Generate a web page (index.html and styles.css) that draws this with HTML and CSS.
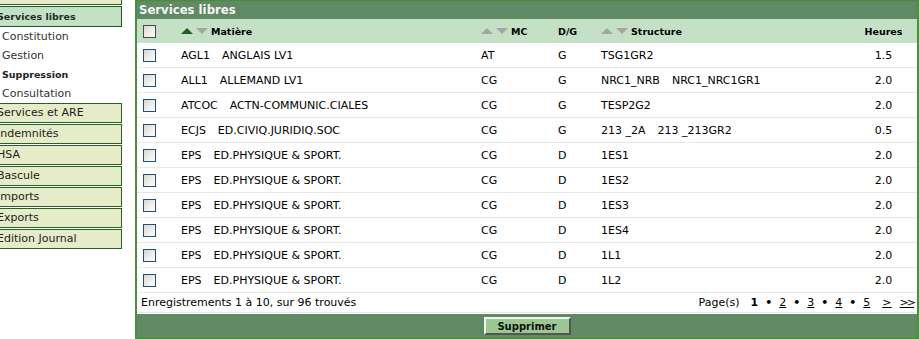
FILE: index.html
```html
<!DOCTYPE html>
<html lang="fr">
<head>
    <meta charset="UTF-8">
    <title>Services libres</title>
    <link rel="stylesheet" href="styles.css">
</head>
<body>
<div class="page">
    <div class="sidebar">
        <div class="menu-item cut"></div>
        <div class="menu-item active">Services libres</div>
        <a class="sub">Constitution</a>
        <a class="sub">Gestion</a>
        <a class="sub current">Suppression</a>
        <a class="sub">Consultation</a>
        <div class="menu-item">Services et ARE</div>
        <div class="menu-item">Indemnités</div>
        <div class="menu-item">HSA</div>
        <div class="menu-item">Bascule</div>
        <div class="menu-item">Imports</div>
        <div class="menu-item">Exports</div>
        <div class="menu-item">Edition Journal</div>
    </div>
    <div class="panel">
        <div class="panel-title">Services libres</div>
        <table class="grid">
            <colgroup>
                <col class="c-check"><col class="c-mat"><col class="c-mc"><col class="c-dg"><col class="c-struct"><col class="c-hrs">
            </colgroup>
            <tr class="head">
                <th><span class="check head-check"></span></th>
                <th><span class="up on"></span><span class="down"></span>Matière</th>
                <th><span class="up"></span><span class="down"></span>MC</th>
                <th>D/G</th>
                <th><span class="up"></span><span class="down"></span>Structure</th>
                <th class="hrs">Heures</th>
            </tr>
            <tr><td><span class="check"></span></td><td><span class="code">AGL1</span>ANGLAIS LV1</td><td>AT</td><td>G</td><td>TSG1GR2</td><td class="hrs">1.5</td></tr>
            <tr><td><span class="check"></span></td><td><span class="code">ALL1</span>ALLEMAND LV1</td><td>CG</td><td>G</td><td><span class="code">NRC1_NRB</span>NRC1_NRC1GR1</td><td class="hrs">2.0</td></tr>
            <tr><td><span class="check"></span></td><td><span class="code">ATCOC</span>ACTN-COMMUNIC.CIALES</td><td>CG</td><td>G</td><td>TESP2G2</td><td class="hrs">2.0</td></tr>
            <tr><td><span class="check"></span></td><td><span class="code">ECJS</span>ED.CIVIQ.JURIDIQ.SOC</td><td>CG</td><td>G</td><td><span class="code">213 _2A</span>213 _213GR2</td><td class="hrs">0.5</td></tr>
            <tr><td><span class="check"></span></td><td><span class="code">EPS</span>ED.PHYSIQUE &amp; SPORT.</td><td>CG</td><td>D</td><td>1ES1</td><td class="hrs">2.0</td></tr>
            <tr><td><span class="check"></span></td><td><span class="code">EPS</span>ED.PHYSIQUE &amp; SPORT.</td><td>CG</td><td>D</td><td>1ES2</td><td class="hrs">2.0</td></tr>
            <tr><td><span class="check"></span></td><td><span class="code">EPS</span>ED.PHYSIQUE &amp; SPORT.</td><td>CG</td><td>D</td><td>1ES3</td><td class="hrs">2.0</td></tr>
            <tr><td><span class="check"></span></td><td><span class="code">EPS</span>ED.PHYSIQUE &amp; SPORT.</td><td>CG</td><td>D</td><td>1ES4</td><td class="hrs">2.0</td></tr>
            <tr><td><span class="check"></span></td><td><span class="code">EPS</span>ED.PHYSIQUE &amp; SPORT.</td><td>CG</td><td>D</td><td>1L1</td><td class="hrs">2.0</td></tr>
            <tr><td><span class="check"></span></td><td><span class="code">EPS</span>ED.PHYSIQUE &amp; SPORT.</td><td>CG</td><td>D</td><td>1L2</td><td class="hrs">2.0</td></tr>
        </table>
        <div class="footer">
            <span class="count">Enregistrements 1 à 10, sur 96 trouvés</span>
            <div class="pager">
                <span class="label">Page(s)</span>
                <b>1</b><span class="dot">•</span>
                <a>2</a><span class="dot">•</span>
                <a>3</a><span class="dot">•</span>
                <a>4</a><span class="dot">•</span>
                <a>5</a>
                <a class="next">&gt;</a>
                <a class="last">&gt;&gt;</a>
            </div>
        </div>
        <div class="actions">
            <button class="btn">Supprimer</button>
        </div>
    </div>
</div>
</body>
</html>
```

FILE: styles.css
```css
body{
    margin: 0;
    font-family: "DejaVu Sans", Verdana, sans-serif;
    font-size: 11px;
    color: #000000;
    background: #ffffff;
    overflow: hidden;
}
.page{
    display: flex;
    align-items: flex-start;
    gap: 13px;
}
.sidebar{
    width: 134px;
    margin-left: -12px;
    flex-shrink: 0;
    display: flex;
    flex-direction: column;
}
.menu-item{
    box-sizing: border-box;
    height: 20px;
    line-height: 18px;
    padding-left: 8px;
    margin-bottom: 1px;
    background-color: #e6ebc8;
    border: 1px solid #25612a;
    color: #222222;
    white-space: nowrap;
}
.menu-item.cut{
    height: 5px;
    border-top: none;
}
.menu-item.active{
    height: 21px;
    line-height: 19px;
    margin-bottom: 0;
    background-color: #c5e1c5;
    border-color: #1a5a1f;
    font-weight: bold;
    font-size: 9.5px;
    color: #1e2e1e;
}
.sub{
    display: block;
    height: 19px;
    line-height: 19px;
    padding-left: 14px;
    color: #333333;
}
.sub.current{
    font-weight: bold;
    font-size: 9.5px;
    color: #222222;
}
.panel{
    box-sizing: border-box;
    width: 784px;
    flex-shrink: 0;
    border-left: 2px solid #4e8c40;
    border-right: 2px solid #4e8c40;
}
.panel-title{
    height: 18px;
    line-height: 18px;
    border-top: 1px solid #4a8a3c;
    background-color: #5f8a64;
    color: #f6f6f6;
    font-weight: bold;
    font-size: 11.7px;
    padding-left: 2px;
}
.grid{
    width: 780px;
    table-layout: fixed;
    border-collapse: collapse;
}
.c-check{ width: 44px; }
.c-mat{ width: 300px; }
.c-mc{ width: 77px; }
.c-dg{ width: 43px; }
.c-struct{ width: 249px; }
.c-hrs{ width: 67px; }
.grid th{
    height: 24px;
    padding: 0;
    text-align: left;
    background-color: #c5e1c5;
    font-size: 9.5px;
    font-weight: bold;
    white-space: nowrap;
}
.grid th:first-child,
.grid td:first-child{
    padding-left: 6px;
}
.grid td{
    height: 24px;
    padding: 0;
    border-bottom: 1px solid #e8e8e8;
    white-space: nowrap;
}
.grid .hrs{
    text-align: center;
}
.check{
    display: inline-block;
    box-sizing: border-box;
    width: 13px;
    height: 13px;
    vertical-align: middle;
    border: 1px solid #1d4f7f;
    background: linear-gradient(135deg, #d8d8d2 0%, #f0f0ec 60%, #ffffff 100%);
}
.head-check{
    border-color: #4a4a4a;
}
.up,
.down{
    display: inline-block;
    width: 0;
    height: 0;
    border-left: 6px solid transparent;
    border-right: 6px solid transparent;
    vertical-align: 1px;
}
.up{
    border-bottom: 6px solid #a5a5a5;
    margin-right: 3px;
}
.up.on{
    border-bottom-color: #1b5e20;
}
.down{
    border-top: 6px solid #a5a5a5;
    margin-right: 3px;
}
.code{
    margin-right: 12px;
}
.footer{
    display: flex;
    justify-content: space-between;
    align-items: center;
    height: 19px;
    padding: 0 3px 0 4px;
    border-bottom: 1px solid #e8e8e8;
    margin-bottom: 1px;
}
.pager{
    display: flex;
    align-items: center;
    gap: 7px;
}
.pager .label{
    margin-right: 4px;
}
.pager a{
    text-decoration: underline;
    color: #000000;
}
.pager .next{
    margin-left: 5px;
}
.pager .last{
    margin-left: 1px;
    letter-spacing: -2px;
}
.dot{
    font-weight: bold;
}
.actions{
    box-sizing: border-box;
    height: 25px;
    padding-top: 3px;
    background-color: #5f8a64;
    border-bottom: 1px solid #4a8a3c;
    display: flex;
    justify-content: center;
}
.btn{
    width: 87px;
    height: 18px;
    padding: 0;
    background-color: #9cc793;
    border: 2px solid;
    border-color: #f2f2f2 #555555 #555555 #f2f2f2;
    font-family: "DejaVu Sans", Verdana, sans-serif;
    font-size: 10px;
    font-weight: bold;
    color: #111111;
}
```
